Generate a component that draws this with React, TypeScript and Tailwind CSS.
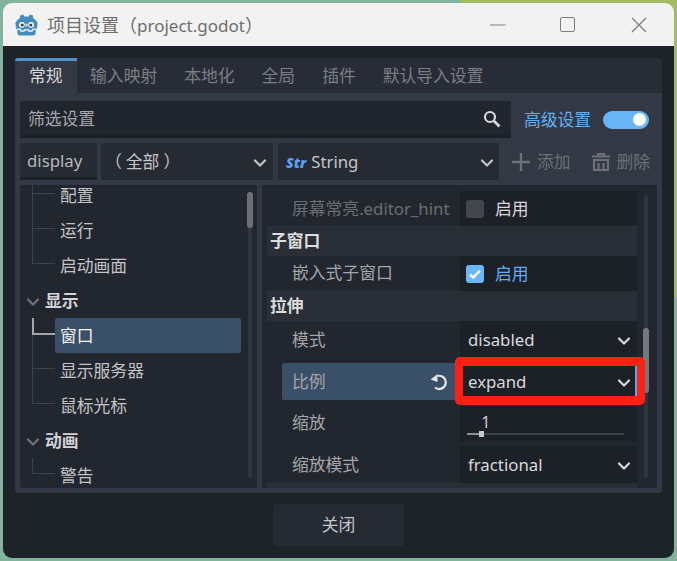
import React from "react";

const font = { fontFamily: '"Noto Sans", "Noto Sans CJK SC", sans-serif' };

const Chevron = ({ className = "" }: { className?: string }) => (
    <svg width="14" height="10" viewBox="0 0 14 10" className={className}>
        <path d="M2 2.5 L7 7.5 L12 2.5" fill="none" stroke="currentColor" strokeWidth="2.2" strokeLinecap="round" strokeLinejoin="round" />
    </svg>
);

const GodotLogo = () => (
    <svg width="23" height="22" viewBox="0 0 23 22">
        <path d="M5 1.5 L8.3 0.6 L9.2 2.6 L13.8 2.6 L14.7 0.6 L18 1.5 L18 4 L20 5.5 L22.6 8.5 L22 15 L20.6 15.6 L20.6 19 Q20.6 21.4 18 21.4 L5 21.4 Q2.4 21.4 2.4 19 L2.4 15.6 L1 15 L0.4 8.5 L3 5.5 L5 4 Z" fill="#478cbf" />
        <circle cx="6.9" cy="10.8" r="2.9" fill="#fff" />
        <circle cx="16.1" cy="10.8" r="2.9" fill="#fff" />
        <circle cx="7.2" cy="11" r="1.6" fill="#414042" />
        <circle cx="15.8" cy="11" r="1.6" fill="#414042" />
        <rect x="10.7" y="9.6" width="1.6" height="3" rx="0.8" fill="#fff" />
        <path d="M1.6 15 L5.4 15.4 L6 17.2 L9 17.2 L9.5 15.8 L13.5 15.8 L14 17.2 L17 17.2 L17.6 15.4 L21.4 15" fill="none" stroke="#fff" strokeWidth="1.2" />
    </svg>
);

const TreeChild = ({ label, last, active }: { label: string; last?: boolean; active?: boolean }) => (
    <div className="flex h-[35px] pl-[12px]">
        <div className="flex w-[23px] shrink-0 flex-col">
            <div className={active ? "h-[17px] border-b-2 border-l-2 border-[#a3a5a9]" : "h-[16px] border-b border-l border-[#3d424c]"} />
            {!last && <div className="flex-1 border-l border-[#3d424c]" />}
        </div>
        <div className={`flex w-[186px] items-center rounded-[2px] pl-[5px] pt-[2px] ${active ? "bg-[#3a5068] text-[#f2f3f4]" : "text-[#c3c4c7]"}`}>{label}</div>
    </div>
);

const TreeGroup = ({ label }: { label: string }) => (
    <div className="flex h-[35px] items-center pl-[6px] pt-[2px] font-bold text-[#d2d3d5]">
        <Chevron className="mr-[5px] text-[#6f7278]" />
        <span>{label}</span>
    </div>
);

const Section = ({ label }: { label: string }) => (
    <div className="flex h-[30px] items-center bg-[#2a2e37] pl-[3px] font-bold text-[#dcdddf]">{label}</div>
);

const Label = ({ children, className = "pt-[2px]" }: { children: React.ReactNode; className?: string }) => (
    <div className={`ml-[15px] flex w-[178px] items-center pl-[10px] text-[#a4a6aa] ${className}`}>{children}</div>
);

const Value = ({ children, className = "pt-[2px]" }: { children: React.ReactNode; className?: string }) => (
    <div className={`relative flex w-[177px] items-center rounded-[2px] bg-[#1c2027] pl-[8px] pr-[6px] text-[#d8d9db] ${className}`}>{children}</div>
);

const Tabs = ["输入映射", "本地化", "全局", "插件", "默认导入设置"];

const Tree = () => (
    <div className="flex h-[303px] w-[237px] rounded-[2px] bg-[#22262e]">
        <div className="flex-1 overflow-hidden">
            <div className="-mt-[7px]">
                <TreeChild label="配置" />
                <TreeChild label="运行" />
                <TreeChild label="启动画面" last />
                <TreeGroup label="显示" />
                <TreeChild label="窗口" active />
                <TreeChild label="显示服务器" />
                <TreeChild label="鼠标光标" last />
                <TreeGroup label="动画" />
                <TreeChild label="警告" last />
            </div>
        </div>
        <div className="mr-[4px] mt-[7px] h-[286px] w-[6px] rounded-full">
            <div className="mx-auto h-full w-[4px] rounded-full bg-[#2f343e]">
                <div className="-ml-[1px] h-[36px] w-[6px] rounded-full bg-[#6c6f75]" />
            </div>
        </div>
    </div>
);

const Inspector = () => (
    <div className="flex h-[303px] w-[395px] rounded-[2px] bg-[#22262e] pl-[5px] pt-[6px]">
        <div className="w-[370px]">
            <div className="flex h-[35px]">
                <Label className="pt-[2px] text-[#6b6e74]!">屏幕常亮.editor_hint</Label>
                <Value className="">
                    <div className="-ml-[2px] mr-[11px] h-[18px] w-[18px] rounded-[3px] bg-[#42454d]" />
                    <span className="pt-[2px]">启用</span>
                </Value>
            </div>
            <Section label="子窗口" />
            <div className="flex h-[35px]">
                <Label className="">嵌入式子窗口</Label>
                <Value className="">
                    <div className="-ml-[2px] mr-[11px] flex h-[18px] w-[18px] items-center justify-center rounded-[3px] bg-[#6cb6f8]">
                        <svg width="14" height="12" viewBox="0 0 14 12">
                            <path d="M2 6.5 L5.3 9.5 L12 2.5" fill="none" stroke="#fff" strokeWidth="2.4" />
                        </svg>
                    </div>
                    <span className="pt-[2px] text-[#63aef0]">启用</span>
                </Value>
            </div>
            <Section label="拉伸" />
            <div className="flex h-[37px]">
                <Label>模式</Label>
                <Value>
                    disabled
                    <Chevron className="ml-auto text-[#d8d9db]" />
                </Value>
            </div>
            <div className="mt-[5px] flex h-[37px]">
                <div className="ml-[15px] flex w-[178px] items-center rounded-[2px] bg-[#3a5068] pl-[10px] text-[#a4a6aa]">
                    <span className="pt-[2px]">比例</span>
                    <svg width="18" height="18" viewBox="0 0 18 18" className="ml-auto mr-[12px]">
                        <path d="M7.5 3 A6.6 6.6 0 1 1 5 14.5" fill="none" stroke="#e4e5e7" strokeWidth="2.2" />
                        <path d="M0.5 6.5 L7.5 1 L7.5 9 Z" fill="#e4e5e7" />
                    </svg>
                </div>
                <Value>
                    expand
                    <Chevron className="ml-auto text-[#d8d9db]" />
                    <div className="absolute -left-[5px] -top-[6px] h-[48px] w-[190px] rounded-[5px] border-[9px] border-l-[8px] border-[#fe2012]">
                        <div className="absolute -right-[1px] top-0 h-full w-[2px] bg-[#5ba6ee]" />
                    </div>
                </Value>
            </div>
            <div className="mt-[4px] flex h-[37px]">
                <Label>缩放</Label>
                <div className="w-[177px] rounded-[2px] bg-[#1c2027] pl-[7px]">
                    <div className="h-[29px] pl-[14px] pt-[6px] leading-[23px] text-[#c8c9cc]">1</div>
                    <div className="relative h-[2px] w-[157px] bg-[#3c4048]">
                        <div className="h-full w-[12px] bg-[#8d9096]" />
                        <div className="absolute -top-[2px] left-[12px] h-[6px] w-[5px] bg-[#c6c7ca]" />
                    </div>
                </div>
            </div>
            <div className="mt-[5px] flex h-[37px]">
                <Label>缩放模式</Label>
                <Value>
                    fractional
                    <Chevron className="ml-auto text-[#d8d9db]" />
                </Value>
            </div>
            <div className="h-[5px] bg-[#2a2e37]" />
        </div>
        <div className="ml-[7px] mt-[4px] h-[283px] w-[4px] rounded-full bg-[#2f343e]">
            <div className="-ml-[1px] mt-[133px] h-[65px] w-[6px] rounded-full bg-[#74777d]" />
        </div>
    </div>
);

export default function App() {
    return (
        <div
            className="h-[561px] w-[677px] overflow-hidden bg-[linear-gradient(54deg,#82b39d_80%,#a6ba62_80%)] p-[3px] text-[16.8px] leading-none"
            style={font}
        >
            <div className="flex h-[555px] w-[671px] flex-col overflow-hidden rounded-[9px]">
                <div className="flex h-[43px] shrink-0 items-center bg-[#f2f2f2] pl-[12px] pr-[27px]">
                    <GodotLogo />
                    <span className="ml-[9px] text-[18px] text-[#6e6e6e]">
                        项目设置（<span className="text-[17px]">project.godot</span>）
                    </span>
                    <svg width="16" height="2" viewBox="0 0 16 2" className="ml-auto mr-[54px]">
                        <path d="M0 1 H15.5" stroke="#7d7d7d" strokeWidth="1.2" />
                    </svg>
                    <div className="mr-[56px] h-[15px] w-[15px] rounded-[2px] border-[1.5px] border-[#7d7d7d]" />
                    <svg width="16" height="16" viewBox="0 0 16 16">
                        <path d="M1 1 L15 15 M15 1 L1 15" stroke="#7d7d7d" strokeWidth="1.3" />
                    </svg>
                </div>
                <div className="flex flex-1 flex-col bg-[#1e2229] pl-[12px] pt-[12px]">
                    <div className="w-[647px] overflow-hidden rounded-[3px]">
                        <div className="flex h-[35px] bg-[#282c36]">
                            <div className="flex items-center border-t-[3px] border-[#4f94cd] bg-[#323844] px-[14px] pb-[2px] text-[#d5d6d8]">常规</div>
                            {Tabs.map((tab) => (
                                <div key={tab} className="flex items-center px-[13.5px] pt-[2px] text-[#7b7e84]">{tab}</div>
                            ))}
                        </div>
                        <div className="h-[400px] bg-[#323844] p-[5px] pt-[8px]">
                            <div className="flex h-[37px] items-center">
                                <div className="flex h-full w-[491px] items-center rounded-t-[2px] border-b-[3px] border-[#1c2027] bg-[#21252e] pl-[8px] pr-[10px] pt-[2px] text-[#a6a8ac]">
                                    筛选设置
                                    <svg width="18" height="18" viewBox="0 0 18 18" className="ml-auto">
                                        <circle cx="7" cy="7" r="5" fill="none" stroke="#d6d7d9" strokeWidth="2.2" />
                                        <path d="M11 11 L16.5 16.5" stroke="#d6d7d9" strokeWidth="2.8" />
                                    </svg>
                                </div>
                                <span className="ml-[13px] pt-[2px] text-[#63aef0]">高级设置</span>
                                <div className="ml-[12px] flex h-[18px] w-[46px] items-center justify-end rounded-full bg-[#69b4f7] pr-[3px]">
                                    <div className="h-[13px] w-[13px] rounded-full bg-white" />
                                </div>
                            </div>
                            <div className="mt-[5px] flex h-[37px] items-center">
                                <div className="flex h-full w-[77px] items-center rounded-t-[2px] border-b-[3px] border-[#1c2027] bg-[#252a33] pl-[7px] pt-[2px] text-[#b6b8bb]">display</div>
                                <div className="ml-[4px] flex h-full w-[172px] items-center rounded-[2px] bg-[#252a33] pl-[8px] pr-[6px] pt-[2px] text-[#c4c5c8]">
                                    <span className="-ml-[4px] mr-[4px]">（</span>全部<span className="ml-[4px]">）</span>
                                    <Chevron className="ml-auto text-[#c4c5c8]" />
                                </div>
                                <div className="ml-[5px] flex h-full w-[221px] items-center rounded-[2px] bg-[#252a33] pl-[8px] pr-[5px] pt-[2px] text-[#c4c5c8]">
                                    <span className="mr-[5px] text-[14px] font-black italic text-[#5e9ff2]">Str</span>
                                    String
                                    <Chevron className="ml-auto text-[#c4c5c8]" />
                                </div>
                                <svg width="18" height="18" viewBox="0 0 18 18" className="ml-[13px]">
                                    <path d="M9 0 V18 M0 9 H18" stroke="#6d7077" strokeWidth="2.4" />
                                </svg>
                                <span className="ml-[7px] pt-[2px] text-[#6d7077]">添加</span>
                                <svg width="18" height="18" viewBox="0 0 18 18" className="ml-[21px]">
                                    <path d="M0 3.6 H18 M6 3.6 V1 H12 V3.6" fill="none" stroke="#6d7077" strokeWidth="2" />
                                    <path d="M2 7 H16 V17 H2 Z M6.5 10 V17 M11.5 10 V17" fill="none" stroke="#6d7077" strokeWidth="2.2" />
                                </svg>
                                <span className="ml-[7px] pt-[2px] text-[#6d7077]">删除</span>
                            </div>
                            <div className="mt-[5px] flex gap-[5px]">
                                <Tree />
                                <Inspector />
                            </div>
                        </div>
                    </div>
                    <div className="ml-[258px] mt-[11px] flex h-[42px] w-[131px] items-center justify-center rounded-[3px] bg-[#252a33] text-[#c6c7ca]">关闭</div>
                </div>
            </div>
        </div>
    );
}
